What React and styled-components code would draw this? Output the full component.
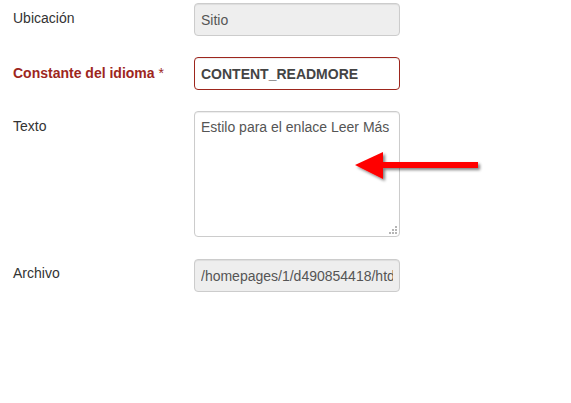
import React from "react";
import styled, { createGlobalStyle } from "styled-components";

const Global = createGlobalStyle`
  html, body { margin: 0; padding: 0; background: #fff; }
  body { font-family: "Liberation Sans", Arial, sans-serif; font-size: 14px; color: #333; }
`;

const Page = styled.div`
  position: relative;
  width: 571px;
  height: 403px;
  padding-top: 3px;
  box-sizing: border-box;
`;

const Row = styled.div`
  display: grid;
  grid-template-columns: 194px 206px;
  margin-bottom: ${(p) => p.$gap}px;
`;

const Label = styled.label`
  padding-left: 13px;
  padding-top: ${(p) => p.$top}px;
  font-size: 14px;
  line-height: 18px;
  color: ${(p) => (p.$invalid ? "#9d261d" : "#333")};
  font-weight: ${(p) => (p.$invalid ? "bold" : "normal")};
`;

const Star = styled.span`
  font-weight: normal;
  margin-left: 4px;
`;

const Input = styled.input`
  box-sizing: border-box;
  width: 206px;
  height: 33px;
  margin: 0;
  padding: 6px 6px;
  font-family: "Liberation Sans", Arial, sans-serif;
  font-size: 14px;
  color: ${(p) => (p.$invalid ? "#444" : "#555")};
  font-weight: ${(p) => (p.$invalid ? "bold" : "normal")};
  background: ${(p) => (p.readOnly ? "#eee" : "#fff")};
  border: 1px solid ${(p) => (p.$invalid ? "#9d261d" : "#ccc")};
  border-radius: 4px;
  outline: none;
  box-shadow: inset 0 1px 1px rgba(0, 0, 0, 0.075);
`;

const AreaWrap = styled.div`
  position: relative;
  width: 206px;
  height: 126px;
`;

const TextArea = styled.textarea`
  display: block;
  box-sizing: border-box;
  width: 206px;
  height: 126px;
  margin: 0;
  padding: 6px 6px;
  font-family: "Liberation Sans", Arial, sans-serif;
  font-size: 14px;
  line-height: 18px;
  color: #555;
  background: #fff;
  border: 1px solid #ccc;
  border-radius: 4px;
  outline: none;
  resize: none;
  box-shadow: inset 0 1px 1px rgba(0, 0, 0, 0.075);
`;

const Grip = styled.svg`
  position: absolute;
  right: 3px;
  bottom: 3px;
  pointer-events: none;
`;

const Arrow = styled.svg`
  position: absolute;
  left: 350px;
  top: 146px;
  overflow: visible;
`;

export default function App() {
  return (
    <Page>
      <Global />
      <Row $gap={21}>
        <Label $top={6}>Ubicación</Label>
        <Input readOnly value="Sitio" />
      </Row>
      <Row $gap={21}>
        <Label $top={7} $invalid>
          Constante del idioma<Star>*</Star>
        </Label>
        <Input $invalid defaultValue="CONTENT_READMORE" />
      </Row>
      <Row $gap={22}>
        <Label $top={6}>Texto</Label>
        <AreaWrap>
          <TextArea defaultValue="Estilo para el enlace Leer Más" />
          <Grip width="8" height="8" viewBox="0 0 8 8">
            <g fill="#b5b5b5">
              <rect x="6" y="0" width="2" height="2" />
              <rect x="3" y="3" width="2" height="2" />
              <rect x="6" y="3" width="2" height="2" />
              <rect x="0" y="6" width="2" height="2" />
              <rect x="3" y="6" width="2" height="2" />
              <rect x="6" y="6" width="2" height="2" />
            </g>
          </Grip>
        </AreaWrap>
      </Row>
      <Row $gap={0}>
        <Label $top={5}>Archivo</Label>
        <Input readOnly value="/homepages/1/d490854418/htdocs/language/es-ES/es-ES.ini" />
      </Row>
      <Arrow width="140" height="40" viewBox="0 0 140 40">
        <defs>
          <filter id="sh" x="-20%" y="-40%" width="140%" height="180%">
            <feGaussianBlur in="SourceAlpha" stdDeviation="1.5" />
            <feOffset dx="2" dy="2" result="b" />
            <feComponentTransfer>
              <feFuncA type="linear" slope="0.5" />
            </feComponentTransfer>
            <feMerge>
              <feMergeNode />
              <feMergeNode in="SourceGraphic" />
            </feMerge>
          </filter>
        </defs>
        <g filter="url(#sh)">
          <rect x="32" y="16" width="96" height="6" fill="#ff0000" />
          <polygon points="5,19 33,6 33,33" fill="#ff0000" />
        </g>
      </Arrow>
    </Page>
  );
}
